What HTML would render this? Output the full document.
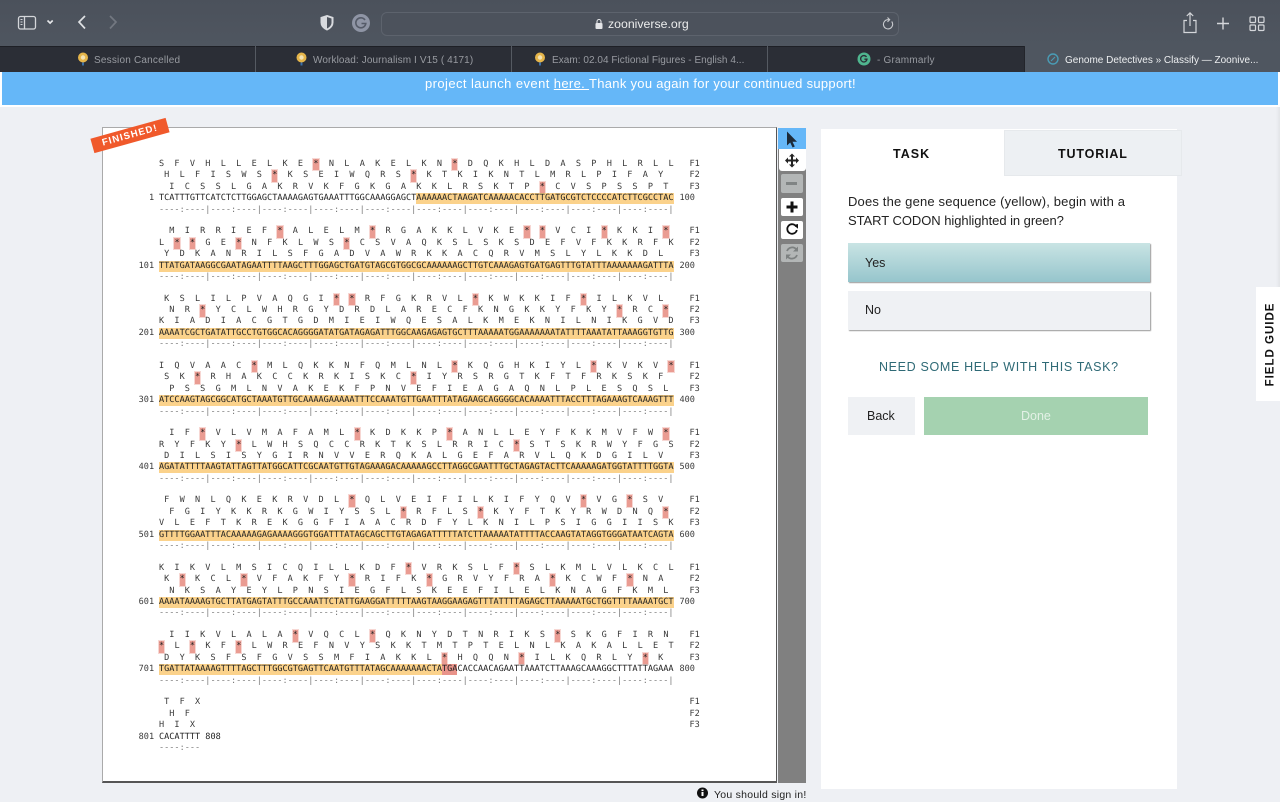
<!DOCTYPE html>
<html><head><meta charset="utf-8"><title>Genome Detectives</title>
<style>
html,body{margin:0;padding:0;width:1280px;height:800px;overflow:hidden;background:#eef0f4;font-family:"Liberation Sans",sans-serif}
.a{position:absolute;white-space:nowrap}
#chrome{position:absolute;left:0;top:0;width:1280px;height:46px;background:linear-gradient(#4b515b,#4f5660)}
#tabs{position:absolute;left:0;top:46px;width:1280px;height:26px;background:#2b2e36;border-top:1px solid #1e2026;box-sizing:border-box}
.sep{position:absolute;top:46px;width:1px;height:26px;background:#555a62}
.tt{position:absolute;top:54.500px;font-size:10px;line-height:12px;color:#989ba1;white-space:nowrap;letter-spacing:.2px}
#banner{position:absolute;left:2px;top:72px;width:1276px;height:33px;background:#65b7f8}
#stripe{position:absolute;left:0;top:72px;width:1280px;height:35px;background:#fff}
#seq{position:absolute;left:102px;top:127px;width:675px;height:656px;background:#fff;box-sizing:border-box;border:1px solid #aaa;border-bottom:2px solid #555;border-right:1px solid #555}
#tool{position:absolute;left:778px;top:128px;width:28px;height:655px;background:#808080}
.blk{position:absolute;left:159px;font-family:"DejaVu Sans Mono",monospace;font-size:8.555px;color:#3a3a3a;text-rendering:geometricPrecision}
.r{height:11.45px;line-height:11.45px;white-space:pre}
.r b{display:inline-block;height:11.6px;font-weight:normal;background:#ea9c92;box-shadow:0 0 0 1px rgba(234,156,146,.4);color:#222;vertical-align:baseline}
.d{color:#222}
.d i{display:inline-block;font-style:normal;height:11px;background:#fbd28b}
.d u{display:inline-block;text-decoration:none;height:11px;background:#e8938a}
.m{color:#777}
.l{position:absolute;left:530.5px;top:0}
.n{position:absolute;left:-20.5px;width:15.6px;top:34.35px;text-align:right}
.n2{position:absolute;left:520.5px;top:34.35px}
.btn{position:absolute;box-sizing:border-box;font-size:13px}
</style></head><body>
<div id="chrome"></div>
<svg class="a" style="left:0;top:-1px" width="420" height="46" fill="none" stroke="#d4d6da">
<rect x="18.5" y="17.5" width="17" height="12.5" rx="2" stroke-width="1.3"/><path d="M24.5 17.5v12.5" stroke-width="1.3"/><path d="M20.5 20.5h2M20.5 23h2M20.5 25.5h2" stroke-width="1"/>
<path d="M47.5 21.5l2.6 2.6 2.6-2.6" stroke="#e6e7ea" stroke-width="1.6"/>
<path d="M85 17l-6 6 6 6.5" stroke="#dfe1e4" stroke-width="1.7"/>
<path d="M110 17l6 6-6 6.5" stroke="#737881" stroke-width="1.7"/>
<path d="M327 16.5l6 2v5c0 3.6-2.6 6-6 7.5-3.4-1.5-6-3.9-6-7.5v-5z" fill="#d8dade" stroke="#d8dade"/><path d="M327 18v11.5c2.6-1.3 4.500-3.2 4.500-6v-4z" fill="#4d535d" stroke="none"/>
<circle cx="361" cy="24" r="9" fill="#8f95a5" stroke="none"/><path d="M365 21a5 5 0 1 0 .8 3.500h-4.300" stroke="#555b68" stroke-width="1.600"/>
</svg>
<div class="a" style="left:381px;top:12px;width:518px;height:24px;box-sizing:border-box;border:1px solid #5d636d;border-radius:6px;background:#4c525c"></div>
<svg class="a" style="left:594px;top:18px" width="10" height="12"><rect x="1.500" y="5" width="7" height="6" rx="1" fill="#e4e5e8"/><path d="M3 5V3.500a2 2 0 0 1 4 0V5" fill="none" stroke="#e4e5e8" stroke-width="1.100"/></svg>
<div class="a" style="left:608px;top:17px;font-size:12.300px;line-height:15px;color:#eceded">zooniverse.org</div>
<svg class="a" style="left:880px;top:15px" width="16" height="18" fill="none" stroke="#c9cbcf" stroke-width="1.100"><path d="M11.700 6.500a4.600 4.600 0 1 1-3.700-1.800h1.500"/><path d="M7.500 2.500l2.200 2.200-2.200 2.200"/></svg>
<svg class="a" style="left:1180px;top:10px" width="90" height="28" fill="none" stroke="#d4d6da" stroke-width="1.200">
<path d="M7 10.500H4v12h12v-12h-3M10 16V3M6.800 6L10 2.800 13.200 6"/>
<path d="M43 7.500v12M37 13.500h12" stroke-width="1.400"/>
<rect x="70" y="7" width="5.500" height="5.500" rx="1"/><rect x="78.500" y="7" width="5.500" height="5.500" rx="1"/><rect x="70" y="15" width="5.500" height="5.500" rx="1"/><rect x="78.500" y="15" width="5.500" height="5.500" rx="1"/>
</svg>

<div id="tabs"></div>
<div class="a" style="left:1024px;top:46px;width:256px;height:26px;background:#4f5660;border-left:1px solid #23252b;box-sizing:border-box"></div>
<div class="sep" style="left:255px"></div><div class="sep" style="left:511px"></div><div class="sep" style="left:767px"></div>
<svg class="a" style="left:0;top:46px" width="1280" height="26">
<circle cx="83" cy="11.500" r="5" fill="#e5b54a"/><circle cx="83" cy="11.500" r="2.200" fill="#f4e3b4"/><rect x="82" y="16.500" width="2" height="3" fill="#3a6ea8"/>
<circle cx="301.500" cy="11.500" r="5" fill="#e5b54a"/><circle cx="301.500" cy="11.500" r="2.200" fill="#f4e3b4"/><rect x="300.500" y="16.500" width="2" height="3" fill="#3a6ea8"/>
<circle cx="540" cy="11.500" r="5" fill="#e5b54a"/><circle cx="540" cy="11.500" r="2.200" fill="#f4e3b4"/><rect x="539" y="16.500" width="2" height="3" fill="#3a6ea8"/>
<circle cx="864" cy="13" r="6.500" fill="#4fb68f"/><path d="M866.500 11a3.200 3.200 0 1 0 .5 2.200h-2.600" fill="none" stroke="#2b2e36" stroke-width="1.300"/>
<circle cx="1053" cy="13" r="5" fill="none" stroke="#4a9cb5" stroke-width="1.400"/><path d="M1051 15l4-4" stroke="#4a9cb5" stroke-width="1.100"/>
</svg>
<div class="tt" style="left:94px">Session Cancelled</div>
<div class="tt" style="left:313px;letter-spacing:.11px">Workload: Journalism I V15 ( 4171)</div>
<div class="tt" style="left:552px;letter-spacing:.04px">Exam: 02.04 Fictional Figures - English 4...</div>
<div class="tt" style="left:877px">- Grammarly</div>
<div class="tt" style="left:1065px;color:#eceef0;letter-spacing:0">Genome Detectives » Classify — Zoonive...</div>

<div id="stripe"></div><div id="banner"></div>
<div class="a" style="left:425px;top:75.500px;font-size:13px;line-height:16px;color:#fff;letter-spacing:.42px">project launch event <span style="text-decoration:underline;letter-spacing:.33px">here. </span><span style="letter-spacing:.29px">Thank you again for your continued support!</span></div>

<div id="seq"></div>
<div class="a" style="left:91px;top:128px;width:78px;height:15px;background:#f0592b;transform:rotate(-15.500deg);transform-origin:39px 7.500px;color:#fff;font-weight:bold;font-size:9.500px;line-height:15px;text-align:center;letter-spacing:1.100px">FINISHED!</div>

<div class="blk" style="top:158.900px">
<div class="r">S  F  V  H  L  L  E  L  K  E  <b>*</b>  N  L  A  K  E  L  K  N  <b>*</b>  D  Q  K  H  L  D  A  S  P  H  L  R  L  L</div>
<div class="r"> H  L  F  I  S  W  S  <b>*</b>  K  S  E  I  W  Q  R  S  <b>*</b>  K  T  K  I  K  N  T  L  M  R  L  P  I  F  A  Y</div>
<div class="r">  I  C  S  S  L  G  A  K  R  V  K  F  G  K  G  A  K  K  L  R  S  K  T  P  <b>*</b>  C  V  S  P  S  S  P  T</div>
<div class="r d">TCATTTGTTCATCTCTTGGAGCTAAAAGAGTGAAATTTGGCAAAGGAGCT<i>AAAAAACTAAGATCAAAAACACCTTGATGCGTCTCCCCATCTTCGCCTAC</i></div>
<div class="r m">----:----|----:----|----:----|----:----|----:----|----:----|----:----|----:----|----:----|----:----|</div>
<div class="l"><div class="r">F1</div><div class="r">F2</div><div class="r">F3</div></div><div class="n r">1</div><div class="n2 r">100</div>
</div>

<div class="blk" style="top:226.200px">
<div class="r">  M  I  R  R  I  E  F  <b>*</b>  A  L  E  L  M  <b>*</b>  R  G  A  K  K  L  V  K  E  <b>*</b>  <b>*</b>  V  C  I  <b>*</b>  K  K  I  <b>*</b></div>
<div class="r">L  <b>*</b>  <b>*</b>  G  E  <b>*</b>  N  F  K  L  W  S  <b>*</b>  C  S  V  A  Q  K  S  L  S  K  S  D  E  F  V  F  K  K  R  F  K</div>
<div class="r"> Y  D  K  A  N  R  I  L  S  F  G  A  D  V  A  W  R  K  K  A  C  Q  R  V  M  S  L  Y  L  K  K  D  L</div>
<div class="r d"><i>TTATGATAAGGCGAATAGAATTTTAAGCTTTGGAGCTGATGTAGCGTGGCGCAAAAAAGCTTGTCAAAGAGTGATGAGTTTGTATTTAAAAAAAGATTTA</i></div>
<div class="r m">----:----|----:----|----:----|----:----|----:----|----:----|----:----|----:----|----:----|----:----|</div>
<div class="l"><div class="r">F1</div><div class="r">F2</div><div class="r">F3</div></div><div class="n r">101</div><div class="n2 r">200</div>
</div>

<div class="blk" style="top:293.500px">
<div class="r"> K  S  L  I  L  P  V  A  Q  G  I  <b>*</b>  <b>*</b>  R  F  G  K  R  V  L  <b>*</b>  K  W  K  K  I  F  <b>*</b>  I  L  K  V  L</div>
<div class="r">  N  R  <b>*</b>  Y  C  L  W  H  R  G  Y  D  R  D  L  A  R  E  C  F  K  N  G  K  K  Y  F  K  Y  <b>*</b>  R  C  <b>*</b></div>
<div class="r">K  I  A  D  I  A  C  G  T  G  D  M  I  E  I  W  Q  E  S  A  L  K  M  E  K  N  I  L  N  I  K  G  V  D</div>
<div class="r d"><i>AAAATCGCTGATATTGCCTGTGGCACAGGGGATATGATAGAGATTTGGCAAGAGAGTGCTTTAAAAATGGAAAAAAATATTTTAAATATTAAAGGTGTTG</i></div>
<div class="r m">----:----|----:----|----:----|----:----|----:----|----:----|----:----|----:----|----:----|----:----|</div>
<div class="l"><div class="r">F1</div><div class="r">F2</div><div class="r">F3</div></div><div class="n r">201</div><div class="n2 r">300</div>
</div>

<div class="blk" style="top:360.800px">
<div class="r">I  Q  V  A  A  C  <b>*</b>  M  L  Q  K  K  N  F  Q  M  L  N  L  <b>*</b>  K  Q  G  H  K  I  Y  L  <b>*</b>  K  V  K  V  <b>*</b></div>
<div class="r"> S  K  <b>*</b>  R  H  A  K  C  C  K  R  K  I  S  K  C  <b>*</b>  I  Y  R  S  R  G  T  K  F  T  F  R  K  S  K  F</div>
<div class="r">  P  S  S  G  M  L  N  V  A  K  E  K  F  P  N  V  E  F  I  E  A  G  A  Q  N  L  P  L  E  S  Q  S  L</div>
<div class="r d"><i>ATCCAAGTAGCGGCATGCTAAATGTTGCAAAAGAAAAATTTCCAAATGTTGAATTTATAGAAGCAGGGGCACAAAATTTACCTTTAGAAAGTCAAAGTTT</i></div>
<div class="r m">----:----|----:----|----:----|----:----|----:----|----:----|----:----|----:----|----:----|----:----|</div>
<div class="l"><div class="r">F1</div><div class="r">F2</div><div class="r">F3</div></div><div class="n r">301</div><div class="n2 r">400</div>
</div>

<div class="blk" style="top:428.100px">
<div class="r">  I  F  <b>*</b>  V  L  V  M  A  F  A  M  L  <b>*</b>  K  D  K  K  P  <b>*</b>  A  N  L  L  E  Y  F  K  K  M  V  F  W  <b>*</b></div>
<div class="r">R  Y  F  K  Y  <b>*</b>  L  W  H  S  Q  C  C  R  K  T  K  S  L  R  R  I  C  <b>*</b>  S  T  S  K  R  W  Y  F  G  S</div>
<div class="r"> D  I  L  S  I  S  Y  G  I  R  N  V  V  E  R  Q  K  A  L  G  E  F  A  R  V  L  Q  K  D  G  I  L  V</div>
<div class="r d"><i>AGATATTTTAAGTATTAGTTATGGCATTCGCAATGTTGTAGAAAGACAAAAAGCCTTAGGCGAATTTGCTAGAGTACTTCAAAAAGATGGTATTTTGGTA</i></div>
<div class="r m">----:----|----:----|----:----|----:----|----:----|----:----|----:----|----:----|----:----|----:----|</div>
<div class="l"><div class="r">F1</div><div class="r">F2</div><div class="r">F3</div></div><div class="n r">401</div><div class="n2 r">500</div>
</div>

<div class="blk" style="top:495.400px">
<div class="r"> F  W  N  L  Q  K  E  K  R  V  D  L  <b>*</b>  Q  L  V  E  I  F  I  L  K  I  F  Y  Q  V  <b>*</b>  V  G  <b>*</b>  S  V</div>
<div class="r">  F  G  I  Y  K  K  R  K  G  W  I  Y  S  S  L  <b>*</b>  R  F  L  S  <b>*</b>  K  Y  F  T  K  Y  R  W  D  N  Q  <b>*</b></div>
<div class="r">V  L  E  F  T  K  R  E  K  G  G  F  I  A  A  C  R  D  F  Y  L  K  N  I  L  P  S  I  G  G  I  I  S  K</div>
<div class="r d"><i>GTTTTGGAATTTACAAAAAGAGAAAAGGGTGGATTTATAGCAGCTTGTAGAGATTTTTATCTTAAAAATATTTTACCAAGTATAGGTGGGATAATCAGTA</i></div>
<div class="r m">----:----|----:----|----:----|----:----|----:----|----:----|----:----|----:----|----:----|----:----|</div>
<div class="l"><div class="r">F1</div><div class="r">F2</div><div class="r">F3</div></div><div class="n r">501</div><div class="n2 r">600</div>
</div>

<div class="blk" style="top:562.700px">
<div class="r">K  I  K  V  L  M  S  I  C  Q  I  L  L  K  D  F  <b>*</b>  V  R  K  S  L  F  <b>*</b>  S  L  K  M  L  V  L  K  C  L</div>
<div class="r"> K  <b>*</b>  K  C  L  <b>*</b>  V  F  A  K  F  Y  <b>*</b>  R  I  F  K  <b>*</b>  G  R  V  Y  F  R  A  <b>*</b>  K  C  W  F  <b>*</b>  N  A</div>
<div class="r">  N  K  S  A  Y  E  Y  L  P  N  S  I  E  G  F  L  S  K  E  E  F  I  L  E  L  K  N  A  G  F  K  M  L</div>
<div class="r d"><i>AAAATAAAAGTGCTTATGAGTATTTGCCAAATTCTATTGAAGGATTTTTAAGTAAGGAAGAGTTTATTTTAGAGCTTAAAAATGCTGGTTTTAAAATGCT</i></div>
<div class="r m">----:----|----:----|----:----|----:----|----:----|----:----|----:----|----:----|----:----|----:----|</div>
<div class="l"><div class="r">F1</div><div class="r">F2</div><div class="r">F3</div></div><div class="n r">601</div><div class="n2 r">700</div>
</div>

<div class="blk" style="top:630px">
<div class="r">  I  I  K  V  L  A  L  A  <b>*</b>  V  Q  C  L  <b>*</b>  Q  K  N  Y  D  T  N  R  I  K  S  <b>*</b>  S  K  G  F  I  R  N</div>
<div class="r"><b>*</b>  L  <b>*</b>  K  F  <b>*</b>  L  W  R  E  F  N  V  Y  S  K  K  T  M  T  P  T  E  L  N  L  K  A  K  A  L  L  E  T</div>
<div class="r"> D  Y  K  S  F  S  F  G  V  S  S  M  F  I  A  K  K  L  <b>*</b>  H  Q  Q  N  <b>*</b>  I  L  K  Q  R  L  Y  <b>*</b>  K</div>
<div class="r d"><i>TGATTATAAAAGTTTTAGCTTTGGCGTGAGTTCAATGTTTATAGCAAAAAAACTA</i><u>TGA</u>CACCAACAGAATTAAATCTTAAAGCAAAGGCTTTATTAGAAA</div>
<div class="r m">----:----|----:----|----:----|----:----|----:----|----:----|----:----|----:----|----:----|----:----|</div>
<div class="l"><div class="r">F1</div><div class="r">F2</div><div class="r">F3</div></div><div class="n r">701</div><div class="n2 r">800</div>
</div>

<div class="blk" style="top:697.300px">
<div class="r"> T  F  X</div>
<div class="r">  H  F</div>
<div class="r">H  I  X</div>
<div class="r d">CACATTTT 808</div>
<div class="r m">----:---</div>
<div class="l"><div class="r">F1</div><div class="r">F2</div><div class="r">F3</div></div><div class="n r">801</div>
</div>

<div id="tool"></div>
<div class="a" style="left:778px;top:128px;width:28px;height:21px;background:#65b7f8"></div>
<div class="a" style="left:779px;top:149px;width:27px;height:22px;background:#fff;border-radius:0 0 3px 3px"></div>
<div class="a" style="left:781px;top:174px;width:22px;height:19px;background:#b3b6b6;border-radius:2px"></div>
<div class="a" style="left:781px;top:198px;width:22px;height:18px;background:#fff;border-radius:2px"></div>
<div class="a" style="left:781px;top:221px;width:22px;height:18px;background:#fff;border-radius:2px"></div>
<div class="a" style="left:781px;top:244px;width:22px;height:18px;background:#b3b6b6;border-radius:2px"></div>
<svg class="a" style="left:778px;top:128px" width="28" height="140">
<path d="M9 3.500v14l3.200-3 2.400 5 2.200-1-2.300-4.800h4.500z" fill="#1d2a38"/>
<path d="M14 25.500l3 3h-2v3h3v-2l3 3-3 3v-2h-3v3h2l-3 3-3-3h2v-3h-3v2l-3-3 3-3v2h3v-3h-2z" fill="#222"/>
<rect x="8" y="54" width="11" height="3" fill="#808484"/>
<path d="M12.500 73.500h3v4h4v3h-4v4h-3v-4h-4v-3h4z" fill="#111"/>
<path d="M18.200 98.500a4.800 4.800 0 1 0 .6 3.500" fill="none" stroke="#111" stroke-width="1.800"/><path d="M15.500 97l4.500-1v4.800z" fill="#111"/>
<path d="M9 123a5.500 5.500 0 0 1 9.500-1.500M19 127a5.500 5.500 0 0 1-9.500 1.500" fill="none" stroke="#7d8181" stroke-width="1.800"/><path d="M20 118.500v5h-5zM8 131.500v-5h5z" fill="#7d8181"/>
</svg>

<svg class="a" style="left:696px;top:787px" width="13" height="13"><circle cx="6.500" cy="6" r="5.500" fill="#111"/><rect x="5.500" y="5" width="2" height="4" fill="#fff"/><rect x="5.500" y="2.500" width="2" height="1.600" fill="#fff"/></svg>
<div class="a" style="left:714px;top:788.500px;font-size:10.500px;line-height:13px;color:#222;letter-spacing:.25px">You should sign in!</div>

<div class="a" style="left:821px;top:129px;width:356px;height:660px;background:#fff"></div>
<div class="a" style="left:1004px;top:130px;width:178px;height:46px;box-sizing:border-box;background:#edf0f3;border:1px solid #e6e9ec"></div>
<div class="a" style="left:893px;top:147px;font-size:12.500px;line-height:15px;font-weight:bold;letter-spacing:1px;color:#111">TASK</div>
<div class="a" style="left:1058px;top:147px;font-size:12.500px;line-height:15px;font-weight:bold;letter-spacing:.85px;color:#111">TUTORIAL</div>
<div class="a" style="left:848px;top:194px;font-size:13px;line-height:15px;color:#222;letter-spacing:.17px">Does the gene sequence (yellow), begin with a</div>
<div class="a" style="left:848px;top:213px;font-size:13px;line-height:15px;color:#222;letter-spacing:-.05px">START CODON highlighted in green?</div>

<div class="a" style="left:848px;top:243px;width:302px;height:39px;background:linear-gradient(#c9e4e4,#96c5cc);box-shadow:1px 1px 1px #9a9a9a"></div>
<div class="a" style="left:865px;top:256px;font-size:12.500px;line-height:15px;color:#222">Yes</div>
<div class="a" style="left:848px;top:291px;width:302px;height:39px;background:#eff1f4;box-shadow:1px 1px 1px #9a9a9a"></div>
<div class="a" style="left:865px;top:303px;font-size:12.500px;line-height:15px;color:#222">No</div>
<div class="a" style="left:879px;top:359.500px;font-size:12.500px;line-height:15px;color:#2f6a76;letter-spacing:.66px">NEED SOME HELP WITH THIS TASK?</div>
<div class="a" style="left:848px;top:397px;width:67px;height:38px;background:#eff1f4"></div>
<div class="a" style="left:867px;top:408.500px;font-size:12.500px;line-height:15px;color:#222">Back</div>
<div class="a" style="left:924px;top:397px;width:224px;height:38px;background:#a5d2b0"></div>
<div class="a" style="left:1021px;top:408.500px;font-size:12.500px;line-height:15px;color:#e3f1e6">Done</div>

<div class="a" style="left:1256px;top:287px;width:24px;height:114px;background:#fff"></div>
<div class="a" style="left:1276px;top:107px;width:4px;height:180px;background:linear-gradient(90deg,rgba(0,0,0,0),rgba(0,0,0,.05))"></div>
<div class="a" style="left:1214px;top:336.500px;width:114px;height:15px;line-height:15px;text-align:center;transform:rotate(-90deg);font-size:11.500px;font-weight:bold;letter-spacing:1px;color:#111">FIELD GUIDE</div>
</body></html>
